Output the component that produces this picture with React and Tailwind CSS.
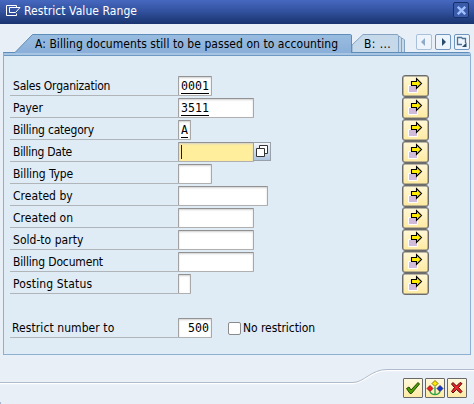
import React from "react";

const FIELDS = [
  { label: "Sales Organization", value: "0001", width: "w-[34px]", tracking: "tracking-[-0.22px]" },
  { label: "Payer", value: "3511", width: "w-[76px]", tracking: "tracking-[-0.05px]" },
  { label: "Billing category", value: "A", width: "w-[13px]", tracking: "tracking-[-0.2px]" },
  { label: "Billing Date", value: "", width: "w-[76px]", active: true, tracking: "tracking-[-0.28px]" },
  { label: "Billing Type", value: "", width: "w-[34px]", tracking: "tracking-[-0.08px]" },
  { label: "Created by", value: "", width: "w-[90px]", tracking: "tracking-[0.04px]" },
  { label: "Created on", value: "", width: "w-[76px]", tracking: "tracking-[0.05px]" },
  { label: "Sold-to party", value: "", width: "w-[76px]", tracking: "tracking-[0.03px]" },
  { label: "Billing Document", value: "", width: "w-[76px]", tracking: "tracking-[-0.16px]" },
  { label: "Posting Status", value: "", width: "w-[13px]", tracking: "tracking-[0.15px]" },
];

const INPUT =
  "h-5 shrink-0 border border-t-[#929292] border-l-[#a2a2a2] border-r-[#a8a8a8] border-b-[#b0b0b0] rounded-[1px] shadow-[inset_0_1px_2px_#d0d0d0]";

function TitleBar() {
  return (
    <header className="flex h-6 items-center bg-linear-to-b from-[#4668c0] via-[#31509c] to-[#18336e] pl-[5px] pr-[5px]">
      <svg className="-mt-[3px]" width="17" height="12" viewBox="0 0 17 12" fill="none" stroke="#fff">
        <path d="M11.500 3V1.500H1.500V11.500H11.500V9.500" />
        <path d="M4.500 3.500H15L10.500 8.500H4.500Z" />
      </svg>
      <h1 className="ml-[2px] -mt-[2px] flex-1 text-[12px] tracking-[0.07px] whitespace-nowrap text-white">Restrict Value Range</h1>
      <button className="-mt-[3px] flex size-4 items-center justify-center rounded-[2px] border border-[#172f68] bg-[#3a5aaa]">
        <svg width="9" height="9" viewBox="0 0 9 9" stroke="#9fbfff" strokeWidth="2.400">
          <path d="M.8 .8L8.200 8.200M8.200 .8L.8 8.200" />
        </svg>
      </button>
    </header>
  );
}

function TabStrip() {
  return (
    <nav className="flex h-[18px] pr-1 pl-[3px]">
      <div className="relative h-[18px] w-[349px] shrink-0">
        <svg className="absolute inset-0" width="349" height="19" viewBox="0 0 349 19">
          <defs>
            <linearGradient id="tabA" x1="0" x2="0" y1="0" y2="1">
              <stop offset="0" stopColor="#99bce0" />
              <stop offset="1" stopColor="#8aafd8" />
            </linearGradient>
          </defs>
          <path d="M0 18.500H12L29.500 .5H347.500Q348.500 .5 348.500 2V19H0Z" fill="url(#tabA)" />
          <path d="M.5 19V18.500H12L29.500 .5H347.500Q348.500 .5 348.500 2V19" fill="none" stroke="#5f8db9" />
        </svg>
        <span className="absolute top-[3px] left-8 text-[12px] leading-[15px] tracking-[0.05px] whitespace-nowrap">
          A: Billing documents still to be passed on to accounting
        </span>
      </div>
      <div className="relative h-[18px] w-[54px] shrink-0">
        <svg className="absolute inset-0" width="54" height="18" viewBox="0 0 54 18" fill="#c5d9eb" stroke="#84a3c2">
          <path d="M30 4.500H51L52.500 6V19H30Z" />
          <path d="M30 2.500H48L49.500 4V19H30Z" />
          <path d="M0 19V11L11 .5H45.500L46.500 2V19Z" />
        </svg>
        <span className="absolute top-[3px] left-[12px] text-[12px] leading-[15px] tracking-[0.4px] whitespace-nowrap">B: ...</span>
      </div>
      <div className="ml-auto flex gap-[3px]">
        <NavButton dim>
          <path d="M9 4V12L5 8Z" fill="#8fa9c8" />
        </NavButton>
        <NavButton>
          <path d="M7 4V12L11 8Z" fill="#284b70" />
        </NavButton>
        <NavButton>
          <path d="M11.500 9V4.500H8.500L7.500 3.500H3.500V10.500H8" fill="none" stroke="#4d7298" strokeWidth="1.300" />
          <path d="M8 13H12.500V8.500Z" fill="#284b70" />
        </NavButton>
      </div>
    </nav>
  );
}

function NavButton({ dim, children }) {
  return (
    <button className={`size-4 rounded-[2px] border bg-[#eef4fb] ${dim ? "border-[#a9c0da]" : "border-[#6f96be]"}`}>
      <svg className="-mt-px -ml-px" width="16" height="16" viewBox="0 0 16 16">{children}</svg>
    </button>
  );
}

function ArrowButton() {
  return (
    <button className="flex h-[22px] w-[27px] shrink-0 rounded-[3px] border border-[#6c6c6c] bg-linear-to-b from-[#fff8d8] to-[#ffeaa0] shadow-[inset_0_0_0_0.5px_#777]">
      <svg width="25" height="20" viewBox="0 0 25 20">
        <path d="M5.500 9.500H14.500V16.500H5.500Z" fill="#d2badb" stroke="#fff" />
        <path d="M8.500 5.500H13.500V2.500L18.500 7.500L13.500 12.500V9.500H8.500Z" fill="#ffeb00" stroke="#000" strokeWidth="1.100" />
      </svg>
    </button>
  );
}

function Row({ label, value, width, active, tracking }) {
  return (
    <div className="flex h-[22px]">
      <div className={`mb-px flex w-[168px] shrink-0 items-end border-b border-[#b0b5ba] pb-px pl-[3px] text-[12px] leading-[15px] whitespace-nowrap ${tracking}`}>
        {label}
      </div>
      <div className={`mt-px pl-[2px] pt-[2px] font-["DejaVu_Sans_Mono",monospace] text-[11.600px] leading-[14px] ${INPUT} ${width} ${active ? "bg-[#ffee9c]" : "bg-white"}`}>
        {value && <span className="inline-block h-[15px] border-b border-black">{value}</span>}
        {active && <span className="block h-[14px] w-px bg-[#1c1c30]" />}
      </div>
      {active && (
        <button className="mt-px -ml-px flex h-[19px] w-[18px] items-center justify-center border border-[#98a1aa] bg-linear-to-b from-[#f3f6fa] to-[#afc5df]">
          <svg width="12" height="12" viewBox="0 0 12 12" fill="#fff" stroke="#333">
            <path d="M3.500 .5H11.500V8.500H3.500Z" />
            <path d="M.5 3.500H8.500V11.500H.5Z" />
          </svg>
        </button>
      )}
      <div className="ml-auto">
        <ArrowButton />
      </div>
    </div>
  );
}

function ToolButton({ children }) {
  return (
    <button className="flex size-5 items-center justify-center rounded-[1px] border border-[#686868] bg-linear-to-b from-[#fff9dc] to-[#ffeba5]">
      <svg className="shrink-0" width="18" height="18" viewBox="0 0 18 18">{children}</svg>
    </button>
  );
}

function Footer() {
  return (
    <footer className="relative mt-[13px] flex h-[37px] justify-end pr-[7px] pt-[10px]">
      <svg className="absolute inset-0" width="474" height="37" viewBox="0 0 474 37" fill="none">
        <path d="M0 15.500H353C364 15.500 371 2.500 387 2.500H474" stroke="#fff" strokeWidth="1.300" />
        <path d="M0 14.500H353C364 14.500 371 1.500 387 1.500H474" stroke="#b0bccb" />
        <path d="M0 34V37H1M474 35V37H472" stroke="#6980a7" />
      </svg>
      <div className="relative flex gap-[2px]">
        <ToolButton>
          <path d="M2.500 9.500L5 8L7 11L14 3.500L15.500 5L7.500 14.500H6Z" fill="#4ca000" stroke="#234500" />
        </ToolButton>
        <ToolButton>
          <path d="M9 8V16M4 12.500Q5 15.500 9 15.500Q13 15.500 14 12.500" fill="none" stroke="#28a048" strokeWidth="1.300" />
          <path d="M9 1.500L12 4.500L9 7.500L6 4.500Z" fill="#ffe900" stroke="#5d5400" strokeWidth=".8" />
          <path d="M4 6.500L7 9.500L4 12.500L1 9.500Z" fill="#f11b22" stroke="#701018" strokeWidth=".8" />
          <path d="M14 6.500L17 9.500L14 12.500L11 9.500Z" fill="#1738d0" stroke="#101d60" strokeWidth=".8" />
        </ToolButton>
        <ToolButton>
          <path d="M3.500 5L5 3.500L8.500 7L12 3.500L14 4.500L10.500 8.500L14 12.500L12.500 14L8.500 10.500L5 14L3.500 12.500L6.500 8.500Z" fill="#ef242b" stroke="#500a0e" />
        </ToolButton>
      </div>
    </footer>
  );
}

export default function App() {
  return (
    <div className='flex h-[404px] w-[474px] flex-col overflow-hidden bg-[#e8eff7] font-["DejaVu_Sans_Condensed","DejaVu_Sans",sans-serif] text-black'>
      <TitleBar />
      <div className="h-[10px] shrink-0" />
      <TabStrip />
      <main className="mr-[3px] ml-[3px] h-[303px] shrink-0 rounded-tr-[3px] border border-[#8eafd0] border-t-[#5f8db9] bg-[#dfebf5]">
        <div className="h-[3px] border-b border-[#6d99c2] bg-[#a7c5e3]" />
        <div className="mt-[19px] mr-[41px] ml-[6px]">
          {FIELDS.map((f) => (
            <Row key={f.label} {...f} />
          ))}
        </div>
        <div className="mt-[22px] ml-[6px] flex h-[21px] items-start">
          <div className="flex h-[21px] w-[168px] items-end border-b border-[#b0b5ba] pb-px pl-[2px] text-[12px] leading-[15px] tracking-[0.08px] whitespace-nowrap">
            Restrict number to
          </div>
          <div className={`mt-px w-[34px] bg-white pt-[2px] pr-[2px] text-right font-["DejaVu_Sans_Mono",monospace] text-[11.600px] leading-[14px] ${INPUT}`}>500</div>
          <span className="mt-[5px] ml-4 size-[13px] rounded-[2px] border border-[#8b8b8b] bg-white" />
          <span className="mt-[4px] ml-[2px] text-[12px] leading-[15px] tracking-[-0.05px] whitespace-nowrap">No restriction</span>
        </div>
      </main>
      <Footer />
    </div>
  );
}
